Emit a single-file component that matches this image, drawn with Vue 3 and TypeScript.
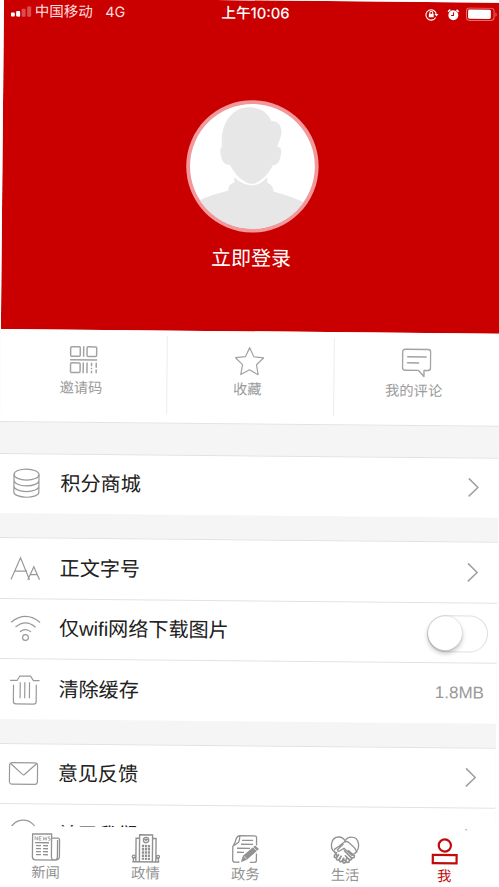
<script setup lang="ts">
import { ref } from 'vue'

type RowIcon = 'coins' | 'font' | 'wifi' | 'trash' | 'mail' | 'info'
interface Row {
  icon: RowIcon
  label: string
  kind: 'link' | 'switch' | 'value'
  value?: string
}

const shortcuts = [
  { id: 'code', label: '邀请码' },
  { id: 'star', label: '收藏' },
  { id: 'comment', label: '我的评论' },
]

const groups: Row[][] = [
  [{ icon: 'coins', label: '积分商城', kind: 'link' }],
  [
    { icon: 'font', label: '正文字号', kind: 'link' },
    { icon: 'wifi', label: '仅wifi网络下载图片', kind: 'switch' },
    { icon: 'trash', label: '清除缓存', kind: 'value', value: '1.8MB' },
  ],
  [
    { icon: 'mail', label: '意见反馈', kind: 'link' },
    { icon: 'info', label: '关于我们', kind: 'link' },
  ],
]

const tabs = [
  { id: 'news', label: '新闻' },
  { id: 'gov', label: '政情' },
  { id: 'affairs', label: '政务' },
  { id: 'life', label: '生活' },
  { id: 'me', label: '我' },
]

const activeTab = ref('me')
const wifiOnly = ref(false)
</script>

<template>
  <div class="stage">
    <div class="screen">
      <main class="content">
        <header class="profile">
          <div class="status">
            <div class="status-left">
              <svg class="signal" width="21" height="11" viewBox="0 0 21 11">
                <rect x="0" y="6.5" width="4" height="4" rx="1" fill="#fff" />
                <rect x="5.3" y="4.8" width="4" height="5.7" rx="1" fill="#fff" />
                <rect x="10.8" y="2.6" width="4" height="7.9" rx="1" fill="#fff" opacity=".3" />
                <rect x="16.3" y="0" width="4" height="10.5" rx="1" fill="#fff" opacity=".3" />
              </svg>
              <span class="carrier">中国移动</span>
              <span class="net">4G</span>
            </div>
            <div class="time">上午10:06</div>
            <div class="status-right">
              <svg width="14" height="13" viewBox="0 0 14 13" fill="none" stroke="#fff">
                <path d="M10.8 9.4A5.2 5.2 0 1 1 11.4 6.3" stroke-width="1.1" />
                <path d="M9.6 5.9h4l-2 2.5z" fill="#fff" stroke="none" />
                <rect x="4" y="5.8" width="4.8" height="3.5" fill="#fff" stroke="none" />
                <path d="M5 6V4.7a1.4 1.4 0 0 1 2.8 0V6" />
              </svg>
              <svg width="13" height="13" viewBox="0 0 13 13" fill="none">
                <circle cx="6.5" cy="7" r="5" fill="#fff" />
                <path d="M1.2 3.6 3.4 1.5M11.8 3.6 9.6 1.5" stroke="#fff" stroke-width="1.6" />
                <path d="M6.7 4v3.3H4.3" stroke="#ca0000" stroke-width="1" />
              </svg>
              <svg class="battery" width="32" height="14" viewBox="0 0 32 14" fill="none">
                <rect x=".6" y=".6" width="27.6" height="12.4" rx="3" stroke="#e66d6d" stroke-width="1" />
                <rect x="2.2" y="2.2" width="22.8" height="9.2" rx="1.4" fill="#fff" />
                <path d="M29.6 4.8c1.6.8 1.6 3.4 0 4.2z" fill="#e66d6d" />
              </svg>
            </div>
          </div>
          <svg class="avatar" width="134" height="134" viewBox="0 0 134 134">
            <defs><clipPath id="face"><circle cx="67" cy="67" r="62.4" /></clipPath></defs>
            <circle cx="67" cy="67" r="66.2" fill="#f1989b" />
            <circle cx="67" cy="67" r="62.4" fill="#fff" />
            <g clip-path="url(#face)" fill="#e7e7e7">
              <path d="M3 109C17 97 34 95 43 91.500Q43 84.500 49 83.500V78Q58 86 66.500 86Q75 86 82 77.500V83.500Q88 85 88.500 92C101 96 119 100 131 111V134H3Z" />
              <path d="M36.500 48C33.800 26 45 8.500 63 8C73 7.700 82 12.500 85.500 21.500C92 21 96 26 95.700 33C95.500 39 92 44 91.800 47.600Q96.500 47 95.500 54Q94 67 87.500 65.500C83 76 73 84.500 66.500 84.500C59 84.500 49 75 44.500 65.500C37 67 35 58 34.700 51Q34.600 47.500 36.500 48Z" />
            </g>
          </svg>
          <div class="login">立即登录</div>
        </header>

        <nav class="shortcuts">
          <div v-for="s in shortcuts" :key="s.id" class="shortcut">
            <svg v-if="s.id === 'code'" width="30" height="30" viewBox="0 0 30 30" fill="none" stroke="#a3a3a3" stroke-width="1.5">
              <rect x="2" y="2" width="9.600" height="9.600" rx="1" /><rect x="18.400" y="2" width="9.600" height="9.600" rx="1" />
              <rect x="2" y="18.200" width="9.600" height="9.600" rx="1" />
              <path d="M15 1.500v10.500M1.500 15h27M14.700 17.800v10.600M18.500 17.800v10.600M23 17.800v3.500M23 23v1.500M23 26v2.400M27.700 17.800v5M27.700 24.500v3.900" />
            </svg>
            <svg v-else-if="s.id === 'star'" width="30" height="30" viewBox="0 0 30 30" fill="none" stroke="#a3a3a3" stroke-width="1.200" stroke-linejoin="round">
              <path d="M15 1.300 19.200 10.400 29 11.500 21.900 18.300 23.700 28.300 15 23.500 6.300 28.300 8 18.300.9 11.500 10.800 10.400Z" />
            </svg>
            <svg v-else width="30" height="30" viewBox="0 0 30 30" fill="none" stroke="#a3a3a3" stroke-width="1.400" stroke-linejoin="round">
              <path d="M3.500 1.500h23a2.500 2.500 0 0 1 2.500 2.500v16a2.500 2.500 0 0 1-2.500 2.500H22.500V28.500L17 22.500H3.500A2.500 2.500 0 0 1 1 20V4a2.500 2.500 0 0 1 2.500-2.500ZM5.500 9h19.500M5.500 15h12" />
            </svg>
            <span>{{ s.label }}</span>
          </div>
        </nav>

        <section v-for="(g, i) in groups" :key="i" class="group">
          <div v-for="r in g" :key="r.label" class="row">
            <svg class="row-icon" width="32" height="32" viewBox="0 0 32 32" fill="none" stroke="#999" stroke-width="1.200">
              <template v-if="r.icon === 'coins'">
                <ellipse cx="16" cy="7.300" rx="12.500" ry="5.500" />
                <path d="M3.500 7.300V24.800c0 3 5.600 5.200 12.500 5.200s12.500-2.200 12.500-5.200V7.300M3.500 13.200c0 3 5.600 5.400 12.500 5.400s12.500-2.400 12.500-5.400M3.500 18.900c0 3 5.600 5.400 12.500 5.400s12.500-2.400 12.500-5.400" />
              </template>
              <path v-else-if="r.icon === 'font'" d="M1.500 27.500 10.800 5.500 20 27.500M5 18.800h12.500M18.300 27.500 24.200 14.500 30 27.500M20.700 22.300h7" />
              <template v-else-if="r.icon === 'wifi'">
                <path d="M2 10.200Q16.500-1.700 31 10.200M6.500 14.900Q16.500 6.300 26.500 14.900M11 19.600q5.500-4.600 11 0" />
                <circle cx="16.500" cy="25.300" r="2.900" />
              </template>
              <path v-else-if="r.icon === 'trash'" d="M1.500 7.300H8.500L11.300 2.800H22L24.800 7.300H31M5 11.500V28.200Q5 30.800 7.600 30.800H25.200Q27.800 30.800 27.800 28.200V11.500M11.700 9V25M16.300 9V25M21 9V25" />
              <template v-else-if="r.icon === 'mail'">
                <rect x="1.800" y="5.500" width="28" height="21.500" rx="2.500" />
                <path d="M2.600 6.200 14.800 17.200Q15.800 18 16.800 17.200L29 6.200" />
              </template>
              <template v-else>
                <circle cx="16" cy="16" r="14" />
                <path d="M15.500 8.500a2 2 0 0 1 2 2M16 13v12" />
              </template>
            </svg>
            <span class="row-label">{{ r.label }}</span>
            <svg v-if="r.kind === 'link'" class="chevron" width="12" height="20" viewBox="0 0 12 20" fill="none" stroke="#a0a0a0" stroke-width="1.500">
              <path d="M1.300 1 10.500 10 1.300 19" />
            </svg>
            <button v-else-if="r.kind === 'switch'" class="switch" :class="{ on: wifiOnly }" @click="wifiOnly = !wifiOnly"><i></i></button>
            <span v-else class="value">{{ r.value }}</span>
          </div>
        </section>
      </main>

      <footer class="tabs">
        <div v-for="t in tabs" :key="t.id" class="tab" :class="{ active: t.id === activeTab }" @click="activeTab = t.id">
          <svg width="30" height="30" viewBox="0 0 30 30" fill="none" stroke="currentColor" stroke-width="1.300">
            <template v-if="t.id === 'news'">
              <path d="M20.500 24V1.500H1.500V24.500Q1.500 27.500 4.500 27.500H25Q28.500 27.500 28.500 24V7.500Q28.500 5.500 26.500 5.500H20.500M20.500 24q0 3.500 3 3.500t3-3.500V7.500" />
              <path d="M4 4.200v3.600M4 4.200l2.500 3.600V4.200M10.500 4.200H8v3.600h2.500M8 6h2M12 4.200l.8 3.600L14 5l1.200 2.800.8-3.600M19 4.200h-1.500V6H19v1.800h-1.800" stroke-width=".7" />
              <path d="M4 10.300h14M5 13.300h5M5 16.300h5M5 19.300h5M5 22.300h5M12 13.300h5M12 16.300h5M12 19.300h5M12 22.300h5" />
            </template>
            <template v-else-if="t.id === 'gov'">
              <path d="M8.500 28V1.500h13V28M8.500 5H5V28M21.500 5H25V28M1.500 28.500h27M2.500 28v-3.500h2M27.500 28v-3.500h-2" stroke-width="1.400" />
              <circle cx="2.900" cy="23.300" r="1.500" /><circle cx="27.100" cy="23.300" r="1.500" />
              <circle cx="15" cy="6.700" r="2.700" /><path d="M13 6.200h4M15 5v3" />
              <path d="M12 11.500v15M15 11.500v15M18 11.500v15" stroke-width="2.200" stroke-dasharray="2.500 .7" />
            </template>
            <template v-else-if="t.id === 'affairs'">
              <path d="M9 1.500H24.500Q26.500 1.500 26.500 3.500V11M9 1.500Q6.500 2 5 8L2.800 12.500V25.500Q2.800 28 5 28H9.500M26.500 19V26Q26.500 28 24 28H20M9 1.500Q10.500 3 8.500 8L3.500 11.500M12 6h11M11 10h12M7 14h13M7 18h7" />
              <path d="m11 28 2-6.500L25 11l4 3.500L17 25.500z" fill="currentColor" stroke="none" />
              <path d="m14 22 2.800 2.700M22.800 12.500l3.800 3.800" stroke="#fff" stroke-width=".8" />
            </template>
            <template v-else-if="t.id === 'life'">
              <path d="M4 16.500C-.5 12.500.8 1.500 9 1.800Q13 2 15 5.500Q17 2 21 1.800C29.200 1.500 30.500 12 26 16.500" />
              <path d="M4 14.500 9 11l5-4q2-1.500 4.500 0l6 5.500 2.500 4-5 3.500-8-7-4 2.500q-2.500 1.500-2.500-1l6-6" />
              <path d="m4 15.500 3 5m0-3.500-2.500 3.500q-.5 2 1.500 2L9 19m0 0-2.500 4q0 2.500 2.500 1.500l2.500-4m0 0-2 4q0 3 2.500 1.500l2-3.500m0 0-1 3.500q0 2.800 2.500 1.300L17 22M14 15l8 8q-.5 2.500-3 1l-4-4m4 4q1.500 3.500-2 3l-3-2.500M18 15l6.500 5.500q0 2.500-2.500 2" stroke-width="1.600" />
            </template>
            <template v-else>
              <circle cx="14.800" cy="9.300" r="6.100" stroke-width="2.200" />
              <rect x="2.900" y="18.900" width="23.800" height="8.200" stroke-width="2.200" />
            </template>
          </svg>
          <span>{{ t.label }}</span>
        </div>
      </footer>
    </div>
  </div>
</template>

<style>
body {
  background: #fff;
}
</style>

<style scoped>
.stage {
  width: 499px;
  height: 887px;
  overflow: hidden;
  background: #fff;
  font-family: 'Liberation Sans', 'Noto Sans CJK SC', sans-serif;
}
.screen {
  width: 499px;
  height: 896px;
  display: flex;
  flex-direction: column;
  transform: translate(4px, -2px) rotate(0.54deg);
  transform-origin: 0 0;
}
.content {
  height: 827.5px;
  flex: none;
  overflow: hidden;
  background: #f5f5f5;
}
.profile {
  height: 330.5px;
  background: #ca0000;
  display: flex;
  flex-direction: column;
  align-items: center;
  color: #fff;
}
.status {
  align-self: stretch;
  height: 26px;
  display: grid;
  grid-template-columns: 1fr auto 1fr;
  align-items: center;
  padding: 0 5px 0 7px;
  box-sizing: border-box;
}
.status-left {
  display: flex;
  align-items: center;
  font-size: 14.5px;
  line-height: 20px;
}
.carrier {
  margin-left: 3px;
  color: #ffdede;
}
.net {
  margin-left: 12.5px;
  font-family: Inter, sans-serif;
  font-size: 14.3px;
  color: #ffdede;
}
.time {
  padding-left: 2px;
  font: 500 14.7px/20px Inter, 'Noto Sans CJK SC', sans-serif;
}
.status-right {
  display: flex;
  align-items: center;
  justify-content: flex-end;
  margin-top: -2px;
}
.status-right svg + svg {
  margin-left: 8px;
}
.status-right .battery {
  margin-left: 6px;
}
.avatar {
  margin-top: 73px;
}
.login {
  margin-top: 10px;
  font-size: 20px;
  line-height: 30px;
}
.shortcuts {
  height: 93px;
  display: grid;
  grid-template-columns: repeat(3, 1fr);
  background: #fff;
  border-bottom: 1.5px solid #e3e3e3;
  box-sizing: border-box;
}
.shortcut {
  display: flex;
  flex-direction: column;
  align-items: center;
  padding-top: 15px;
}
.shortcut + .shortcut {
  background: linear-gradient(#ececec, #ececec) no-repeat left 6px / 1px 78px;
}
.shortcut span {
  margin-top: 3.5px;
  margin-right: 5px;
  font-size: 14.3px;
  line-height: 20px;
  color: #9b9b9b;
}
.group {
  margin-top: 31px;
  background: #fff;
}
.group + .group {
  margin-top: 24px;
}
.row {
  height: 60.5px;
  box-sizing: border-box;
  border-top: 1px solid #e2e2e2;
  display: flex;
  align-items: center;
  padding: 0 19.5px 0 11px;
}
.row-icon {
  flex: none;
}
.row-label {
  flex: 1;
  margin-left: 18px;
  font-size: 20.1px;
  line-height: 30px;
  color: #202020;
}
.switch {
  width: 61px;
  height: 37.5px;
  margin: 2px -10px 0 0;
  box-sizing: border-box;
  border: 1.7px solid #dedede;
  border-radius: 19px;
  padding: 0;
  background: #fff;
  display: flex;
}
.switch i {
  width: 34.5px;
  height: 34.5px;
  border-radius: 50%;
  background: #fff;
  box-shadow: 0 3px 5px rgba(0, 0, 0, 0.25), 0 0 2px rgba(0, 0, 0, 0.18);
}
.switch.on {
  justify-content: flex-end;
  background: #ca0000;
}
.value {
  margin-right: -7px;
  font-size: 17px;
  color: #999;
}
.tabs {
  flex: 1;
  display: grid;
  grid-template-columns: repeat(5, 1fr);
  background: #fff;
}
.tab {
  display: flex;
  flex-direction: column;
  align-items: center;
  padding-top: 6px;
  color: #929292;
}
.tab span {
  font-size: 14.3px;
  line-height: 20px;
}
.tab.active {
  color: #c10a0a;
}
.tab.active span {
  margin-right: 1.5px;
}
</style>
